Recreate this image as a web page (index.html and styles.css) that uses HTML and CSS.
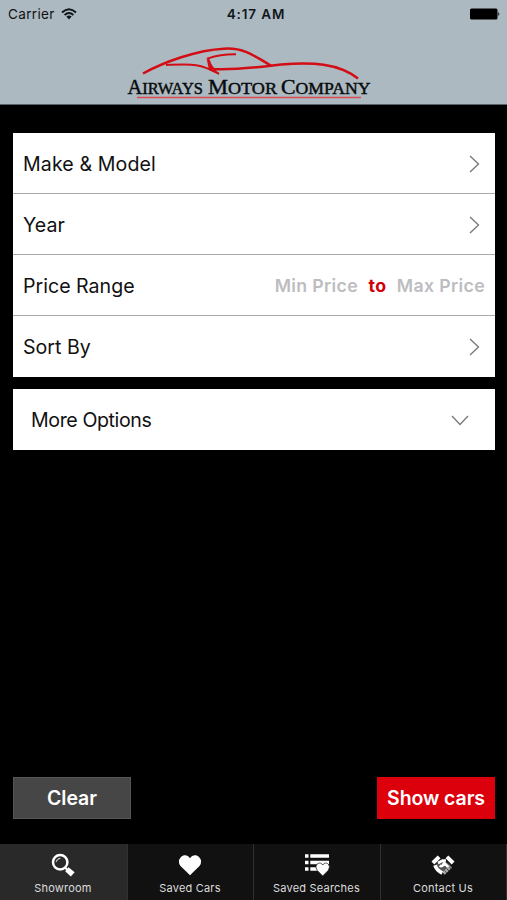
FILE: index.html
```html
<!DOCTYPE html>
<html lang="en">
<head>
<meta charset="utf-8">
<title>Airways Motor Company</title>
<link rel="stylesheet" href="styles.css">
</head>
<body>
<header class="header">
  <div class="status">
    <div class="carrier"><span>Carrier</span>
      <svg width="16" height="12" viewBox="0 0 16 12" fill="none" stroke="#10171b" stroke-width="2"><path d="M1 4.4Q8-2 15 4.4M3.6 7Q8 3 12.4 7"/><path d="M5.3 8.6Q8 6.4 10.7 8.6L8 11.4Z" fill="#10171b" stroke="none"/></svg>
    </div>
    <span class="time">4:17 AM</span>
    <svg class="battery" width="30" height="12" viewBox="0 0 30 12"><rect y=".5" width="27.5" height="11" rx="1.5"/><path d="M28.3 4q2 2 0 4z"/></svg>
  </div>
  <svg class="logo" width="260" height="62" viewBox="120 42 260 62">
    <g fill="none" stroke="#d20d16" stroke-width="2">
      <path d="M143 73.5C164 62 197 50 224 48.7C242 47.5 252 54 271.5 66" stroke-width="2.5"/>
      <path d="M166 65C192 64 199 63 219 73.7"/>
      <path d="M236 54.2Q221 54 208 58.3L212.5 69" stroke-width="1.9"/>
      <path d="M211 69C237 70.5 259 67 281 64.5C312 62 338 63 358 78.5" stroke-width="2.4"/>
      <path d="M137 97.6H361" stroke="#d94c55" stroke-width="1.5"/>
    </g>
    <path d="M206.5 58L219.5 75L209 70Z" fill="#d20d16"/>
    <g class="brand">
      <text x="127.5" y="93.5" textLength="75.5" lengthAdjust="spacingAndGlyphs"><tspan class="cap">A</tspan>IRWAYS</text>
      <text x="208" y="93.5" textLength="69" lengthAdjust="spacingAndGlyphs"><tspan class="cap">M</tspan>OTOR</text>
      <text x="281" y="93.5" textLength="89.5" lengthAdjust="spacingAndGlyphs"><tspan class="cap">C</tspan>OMPANY</text>
    </g>
  </svg>
</header>
<main class="main">
  <section class="card">
    <div class="row"><span class="wide">Make &amp; Model</span><svg class="chev" viewBox="0 0 11 18"><path d="M1 1L9.5 9L1 17"/></svg></div>
    <div class="row"><span>Year</span><svg class="chev" viewBox="0 0 11 18"><path d="M1 1L9.5 9L1 17"/></svg></div>
    <div class="row"><span>Price Range</span><div class="prices"><span>Min Price</span><b>to</b><span>Max Price</span></div></div>
    <div class="row"><span>Sort By</span><svg class="chev" viewBox="0 0 11 18"><path d="M1 1L9.5 9L1 17"/></svg></div>
  </section>
  <section class="card more">
    <div class="row"><span>More Options</span><svg class="down" viewBox="0 0 18 11"><path d="M1 1L9 9.5L17 1"/></svg></div>
  </section>
  <div class="actions">
    <button class="btn">Clear</button>
    <button class="btn show">Show cars</button>
  </div>
</main>
<nav class="tabs">
  <a class="tab active">
    <svg width="26" height="24" viewBox="0 0 26 24"><circle cx="10.2" cy="9.2" r="7.2" fill="none" stroke="#fff" stroke-width="2.5"/><path d="M6.2 9Q7 5.5 10.5 5.3" fill="none" stroke="#bbb" stroke-width="1.3"/><path d="M15 14.5L17.5 17" stroke="#fff" stroke-width="2"/><path d="M18.5 14.3L24.7 19.2L20.8 23.6L15.2 18.3Z" fill="#fff"/></svg>
    <span>Showroom</span></a>
  <a class="tab">
    <svg width="26" height="24" viewBox="0 0 26 24"><path d="M13 22.3L3.5 13Q0 7.8 3.8 4.2C7 1 11 2.2 13 5.3C15 2.2 19 1 22.2 4.2Q26 7.8 22.5 13Z" fill="#fff"/></svg>
    <span>Saved Cars</span></a>
  <a class="tab">
    <svg width="26" height="24" viewBox="0 0 26 24" fill="#fff"><path d="M1 1.2h3.5v3.5H1zM6.3 1.2H25v3.5H6.3zM1 7.7h3.5v3.5H1zM6.3 7.7H25v3.5H6.3zM1 14.2h3.5v3.5H1zM6.3 14.2H14v3.5H6.3z"/><path d="M18.7 23L13 17.2Q10.8 13.5 13 11.2C15.3 9.3 17.5 10 18.7 12C20 10 22.2 9.3 24.4 11.2Q26.6 13.5 24.4 17.2Z" stroke="#111" stroke-width=".7"/></svg>
    <span>Saved Searches</span></a>
  <a class="tab">
    <svg width="26" height="24" viewBox="0 0 26 24" fill="none"><path d="M5.3 11.5L13 20L20.5 12L13 6.5Z" fill="#555"/><path d="M2.9 10L9.1 3.8M16.9 3.8L23.1 10" stroke="#fff" stroke-width="4"/><path d="M5 12.2Q6.5 17 12.3 20" stroke="#fff" stroke-width="3.8"/><path d="M9.7 12.5Q12.5 14.5 14 9.8L18.7 14.5M8 10L12.5 7.5L16 7.5" stroke="#fff" stroke-width="2.6"/><path d="M13.5 20.5L20.8 13.5" stroke="#aaa" stroke-width="3.4" stroke-dasharray="2.5 .5"/></svg>
    <span>Contact Us</span></a>
</nav>
</body>
</html>
```
FILE: styles.css
```css
* { box-sizing: border-box; }
body {
  margin: 0;
  height: 900px;
  display: flex;
  flex-direction: column;
  background: #000;
  color: #111;
  font-family: Inter, "Liberation Sans", sans-serif;
}
.header {
  height: 105px;
  background: #adb9c1;
  border-bottom: 1px solid #59626a;
  display: flex;
  flex-direction: column;
  align-items: center;
}
.status {
  width: 100%;
  height: 28px;
  padding: 0 7px 0 8px;
  display: grid;
  grid-template-columns: 1fr auto 1fr;
  align-items: center;
  font-size: 13.5px;
}
.carrier { display: flex; align-items: center; gap: 6px; letter-spacing: .35px; }
.time { font-weight: 600; font-size: 13.5px; letter-spacing: .85px; color: #10171b; padding-left: 4px; }
.battery { justify-self: end; }
.logo { margin: 14px 0 0 -7px; flex: none; }
.brand { font-family: "Liberation Serif", serif; font-size: 17px; fill: #080b0d; stroke: #080b0d; stroke-width: .45px; }
.cap { font-size: 21px; }
.main {
  flex: 1;
  padding: 28px 12px 25px 13px;
  display: flex;
  flex-direction: column;
}
.card { background: #fff; height: 244px; }
.row {
  height: 61px;
  padding: 1px 15px 0 10px;
  display: flex;
  align-items: center;
  justify-content: space-between;
  font-size: 19.6px;
  border-bottom: 1px solid #aaa;
}
.wide { letter-spacing: .1px; }
.row:last-child { border-bottom: 0; }
.more { height: 61px; margin-top: 12px; }
.more .row { padding: 1px 26px 0 18px; letter-spacing: -.4px; }
.chev, .down { fill: none; stroke: #777; stroke-width: 1.3; }
.chev { width: 11px; height: 18px; }
.down { width: 18px; height: 11px; }
.prices {
  display: flex;
  gap: 10.5px;
  margin-right: -5px;
  font-size: 17.7px;
  letter-spacing: .35px;
  font-weight: 600;
  color: #bdbdc1;
}
.prices b { color: #d0000a; font-weight: 700; }
.actions { margin-top: auto; display: flex; justify-content: space-between; }
.btn {
  width: 118px;
  height: 42px;
  padding: 0;
  border: 1px solid #555;
  background: #464646;
  color: #fff;
  font: 600 19.5px Inter, sans-serif;
}
.show { background: #dc000c; border-color: #dc000c; letter-spacing: -.1px; }
.tabs {
  height: 56px;
  display: grid;
  grid-template-columns: 128px 126px 127px 126px;
  background: #111;
}
.tab {
  display: flex;
  flex-direction: column;
  align-items: center;
  padding: 9px 1px 0 0;
  border-right: 1px solid #303030;
  color: #ddd;
  font-size: 11px;
  letter-spacing: .2px;
}
.tab span { margin-top: 4px; line-height: 14px; }
.active { background: #292929; }
```
